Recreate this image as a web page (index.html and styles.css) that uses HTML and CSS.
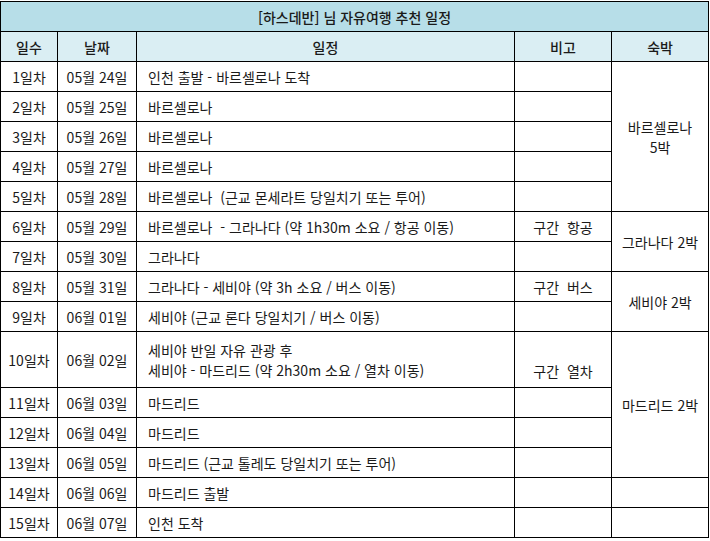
FILE: index.html
```html
<!DOCTYPE html>
<html lang="ko">
<head>
<meta charset="utf-8">
<title>자유여행 추천 일정</title>
<link rel="stylesheet" href="styles.css">
</head>
<body>
<table class="plan">
  <colgroup>
    <col class="c-day">
    <col class="c-date">
    <col class="c-plan">
    <col class="c-note">
    <col class="c-stay">
  </colgroup>
  <thead>
    <tr class="title-row"><th colspan="5">[하스데반] 님 자유여행 추천 일정</th></tr>
    <tr class="head-row"><th>일수</th><th>날짜</th><th>일정</th><th>비고</th><th>숙박</th></tr>
  </thead>
  <tbody>
    <tr><td class="ctr">1일차</td><td class="ctr">05월 24일</td><td class="txt">인천 출발 - 바르셀로나 도착</td><td class="ctr"></td><td class="ctr stay" rowspan="5">바르셀로나<br>5박</td></tr>
    <tr><td class="ctr">2일차</td><td class="ctr">05월 25일</td><td class="txt">바르셀로나</td><td class="ctr"></td></tr>
    <tr><td class="ctr">3일차</td><td class="ctr">05월 26일</td><td class="txt">바르셀로나</td><td class="ctr"></td></tr>
    <tr><td class="ctr">4일차</td><td class="ctr">05월 27일</td><td class="txt">바르셀로나</td><td class="ctr"></td></tr>
    <tr><td class="ctr">5일차</td><td class="ctr">05월 28일</td><td class="txt">바르셀로나  (근교 몬세라트 당일치기 또는 투어)</td><td class="ctr"></td></tr>
    <tr><td class="ctr">6일차</td><td class="ctr">05월 29일</td><td class="txt">바르셀로나  - 그라나다 (약 1h30m 소요 / 항공 이동)</td><td class="ctr">구간  항공</td><td class="ctr" rowspan="2">그라나다 2박</td></tr>
    <tr><td class="ctr">7일차</td><td class="ctr">05월 30일</td><td class="txt">그라나다</td><td class="ctr"></td></tr>
    <tr><td class="ctr">8일차</td><td class="ctr">05월 31일</td><td class="txt">그라나다 - 세비야 (약 3h 소요 / 버스 이동)</td><td class="ctr">구간  버스</td><td class="ctr" rowspan="2">세비야 2박</td></tr>
    <tr><td class="ctr">9일차</td><td class="ctr">06월 01일</td><td class="txt">세비야 (근교 론다 당일치기 / 버스 이동)</td><td class="ctr"></td></tr>
    <tr class="tall"><td class="ctr">10일차</td><td class="ctr">06월 02일</td><td class="txt">세비야 반일 자유 관광 후<br>세비야 - 마드리드 (약 2h30m 소요 / 열차 이동)</td><td class="ctr low">구간  열차</td><td class="ctr" rowspan="4">마드리드 2박</td></tr>
    <tr><td class="ctr">11일차</td><td class="ctr">06월 03일</td><td class="txt">마드리드</td><td class="ctr"></td></tr>
    <tr><td class="ctr">12일차</td><td class="ctr">06월 04일</td><td class="txt">마드리드</td><td class="ctr"></td></tr>
    <tr><td class="ctr">13일차</td><td class="ctr">06월 05일</td><td class="txt">마드리드 (근교 톨레도 당일치기 또는 투어)</td><td class="ctr"></td></tr>
    <tr><td class="ctr">14일차</td><td class="ctr">06월 06일</td><td class="txt">마드리드 출발</td><td class="ctr"></td><td class="ctr"></td></tr>
    <tr><td class="ctr">15일차</td><td class="ctr">06월 07일</td><td class="txt">인천 도착</td><td class="ctr"></td><td class="ctr"></td></tr>
  </tbody>
</table>
</body>
</html>
```
FILE: styles.css
```css
html, body {
  margin: 0;
  padding: 0;
  background: #ffffff;
}

body {
  padding-top: 1px;
  font-family: "Noto Sans CJK KR", "Noto Sans", sans-serif;
  font-size: 14px;
  color: #1a1a1a;
}

.plan {
  border-collapse: collapse;
  table-layout: fixed;
  width: 709px;
}

.c-day { width: 57px; }
.c-date { width: 79px; }
.c-plan { width: 378px; }
.c-note { width: 97px; }
.c-stay { width: 97px; }

.plan th,
.plan td {
  border: 1px solid #000000;
  padding: 0;
  line-height: 20px;
  vertical-align: middle;
  overflow: hidden;
}

.plan tr {
  height: 30px;
}

.plan .title-row th {
  background: #b7dee8;
  text-align: center;
  font-weight: 500;
}

.plan .head-row th {
  background: #daeef3;
  text-align: center;
  font-weight: 500;
}

.plan .ctr {
  text-align: center;
  white-space: pre;
}

.plan .txt {
  text-align: left;
  padding-left: 11px;
  white-space: pre;
}

.plan .stay {
  line-height: 20px;
}

.plan tr.tall {
  height: 56px;
}

.plan .low {
  vertical-align: bottom;
  padding-bottom: 6px;
}
```
